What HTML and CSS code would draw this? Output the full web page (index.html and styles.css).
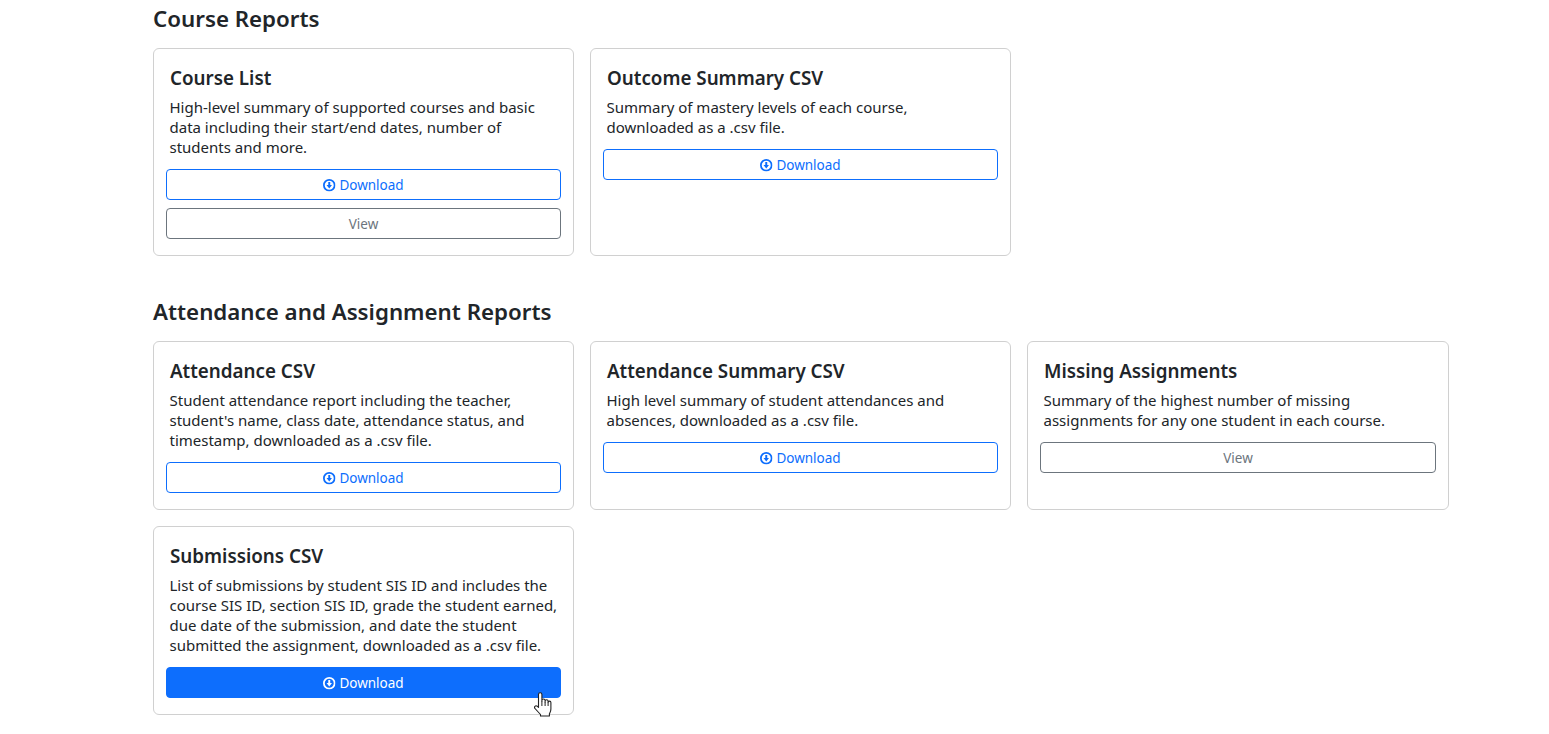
FILE: index.html
```html
<!DOCTYPE html>
<html lang="en">

<head>
    <meta charset="UTF-8">
    <meta name="viewport" content="width=device-width, initial-scale=1.0">
    <title>Reports</title>
    <link rel="stylesheet" href="styles.css">
</head>

<body>
    <svg class="defs" width="0" height="0">
        <symbol id="icon-download" viewBox="0 0 512 512">
            <circle cx="256" cy="256" r="220" fill="none" stroke="currentColor" stroke-width="72"/>
            <path fill="currentColor" d="M216 120h80v130h72L256 392 144 250h72z"/>
        </symbol>
    </svg>

    <main class="page">
        <section class="report-section first">
            <h2>Course Reports</h2>
            <div class="card-grid">
                <div class="card">
                    <h3>Course List</h3>
                    <p>High-level summary of supported courses and basic data including their start/end dates, number of students and more.</p>
                    <a class="btn btn-primary"><svg class="icon"><use href="#icon-download"/></svg>Download</a>
                    <a class="btn btn-secondary">View</a>
                </div>
                <div class="card">
                    <h3>Outcome Summary CSV</h3>
                    <p>Summary of mastery levels of each course, downloaded as a .csv file.</p>
                    <a class="btn btn-primary"><svg class="icon"><use href="#icon-download"/></svg>Download</a>
                </div>
            </div>
        </section>

        <section class="report-section">
            <h2>Attendance and Assignment Reports</h2>
            <div class="card-grid">
                <div class="card">
                    <h3>Attendance CSV</h3>
                    <p>Student attendance report including the teacher, student's name, class date, attendance status, and timestamp, downloaded as a .csv file.</p>
                    <a class="btn btn-primary"><svg class="icon"><use href="#icon-download"/></svg>Download</a>
                </div>
                <div class="card">
                    <h3>Attendance Summary CSV</h3>
                    <p>High level summary of student attendances and absences, downloaded as a .csv file.</p>
                    <a class="btn btn-primary"><svg class="icon"><use href="#icon-download"/></svg>Download</a>
                </div>
                <div class="card">
                    <h3>Missing Assignments</h3>
                    <p>Summary of the highest number of missing assignments for any one student in each course.</p>
                    <a class="btn btn-secondary">View</a>
                </div>
                <div class="card">
                    <h3>Submissions CSV</h3>
                    <p>List of submissions by student SIS ID and includes the course SIS ID, section SIS ID, grade the student earned, due date of the submission, and date the student submitted the assignment, downloaded as a .csv file.</p>
                    <a class="btn btn-primary hover"><svg class="icon"><use href="#icon-download"/></svg>Download
                        <svg class="hand" viewBox="0 0 18 25" width="18" height="25">
                            <path fill="#fff" stroke="#222" stroke-width="1.1" stroke-linejoin="round" d="M4.500 14.500V2.500a1.700 1.700 0 0 1 3.400 0V9V8.600a1.600 1.600 0 0 1 3.200 0V10V9.200a1.500 1.500 0 0 1 3 0V10.500a1.400 1.400 0 0 1 2.800 0V17c0 2.500-1 4-1.500 5v2H6.500v-1.500L1 16.500c-1.400-1.500.6-3.600 2.200-2.300l1.300 1.200z"/>
                            <path fill="none" stroke="#222" stroke-width="1" d="M7.900 9v5M11.100 10v4M14.100 10.500V14"/>
                        </svg>
                    </a>
                </div>
            </div>
        </section>
    </main>
</body>

</html>
```

FILE: styles.css
```css
body {
    margin: 0;
    font-family: "Noto Sans", "Open Sans", sans-serif;
    font-size: 14px;
    color: #212529;
    background: #fff;
}

.defs {
    position: absolute;
}

.page {
    width: 1296px;
    margin-left: 153px;
    padding-bottom: 19px;
}

.report-section {
    margin-top: 37px;
}

.report-section.first {
    margin-top: 0;
}

.report-section h2 {
    margin: 0 0 13px;
    padding-top: 3px;
    font-size: 22.3px;
    line-height: 32px;
    font-weight: 600;
}

.card-grid {
    display: grid;
    grid-template-columns: 421px 421px 422px;
    gap: 16px;
}

.card {
    position: relative;
    box-sizing: border-box;
    padding: 16px 12px;
    border: 1px solid #d0d0d0;
    border-radius: 6px;
    background: #fff;
}

.card h3 {
    margin: 0 4px 6px;
    font-size: 18.8px;
    line-height: 26px;
    font-weight: 600;
}

.card p {
    margin: 0 0 12px 3.5px;
    font-size: 15px;
    line-height: 20px;
}

.btn {
    position: relative;
    display: block;
    box-sizing: border-box;
    height: 31px;
    margin-top: 8px;
    border: 1px solid;
    border-radius: 4px;
    font-size: 13.5px;
    line-height: 31px;
    text-align: center;
}

.card p + .btn {
    margin-top: 0;
}

.btn-primary {
    color: #0d6efd;
    border-color: #0d6efd;
}

.btn-primary.hover {
    color: #fff;
    background: #0d6efd;
}

.btn-secondary {
    color: #6c757d;
    border-color: #6c757d;
}

.icon {
    width: 12.5px;
    height: 12.5px;
    margin-right: 3.5px;
    vertical-align: -1.5px;
}

.hand {
    position: absolute;
    left: 367px;
    top: 24px;
}
```
